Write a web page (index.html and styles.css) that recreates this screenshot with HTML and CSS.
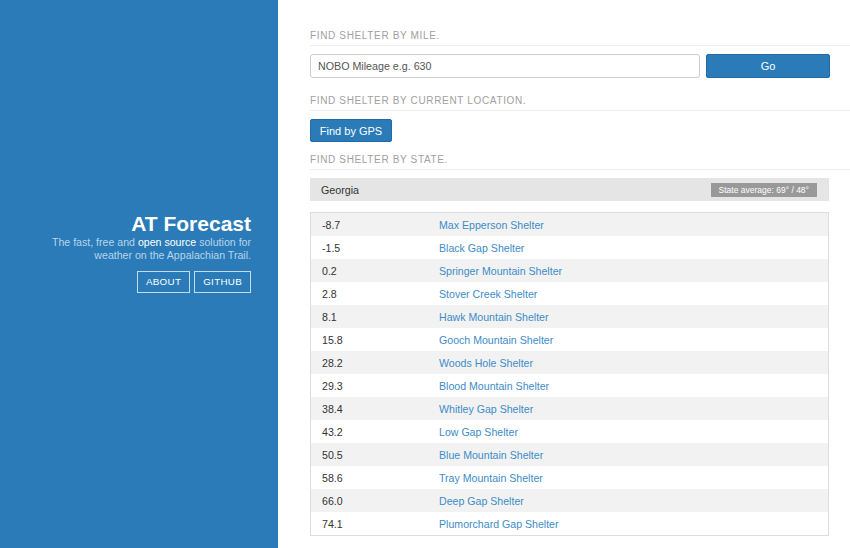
FILE: index.html
```html
<!DOCTYPE html>
<html>
<head>
<meta charset="utf-8">
<link rel="stylesheet" href="styles.css">
</head>
<body>
<div class="page">
  <aside class="sidebar">
    <div class="brand">
      <h1 class="title">AT Forecast</h1>
      <p class="tagline">The fast, free and <span class="hl">open source</span> solution for<br>weather on the Appalachian Trail.</p>
      <div class="nav">
        <a class="navbtn">ABOUT</a>
        <a class="navbtn">GITHUB</a>
      </div>
    </div>
  </aside>
  <main class="main">
    <h2 class="section">FIND SHELTER BY MILE.</h2>
    <div class="mile-row">
      <div class="input">NOBO Mileage e.g. 630</div>
      <button class="btn go">Go</button>
    </div>
    <h2 class="section">FIND SHELTER BY CURRENT LOCATION.</h2>
    <div class="gps-row"><button class="btn gps">Find by GPS</button></div>
    <h2 class="section">FIND SHELTER BY STATE.</h2>
    <div class="state">
      <span>Georgia</span>
      <span class="badge">State average: 69° / 48°</span>
    </div>
    <div class="table">
      <div class="row"><span class="mile">-8.7</span><a class="name">Max Epperson Shelter</a></div>
      <div class="row"><span class="mile">-1.5</span><a class="name">Black Gap Shelter</a></div>
      <div class="row"><span class="mile">0.2</span><a class="name">Springer Mountain Shelter</a></div>
      <div class="row"><span class="mile">2.8</span><a class="name">Stover Creek Shelter</a></div>
      <div class="row"><span class="mile">8.1</span><a class="name">Hawk Mountain Shelter</a></div>
      <div class="row"><span class="mile">15.8</span><a class="name">Gooch Mountain Shelter</a></div>
      <div class="row"><span class="mile">28.2</span><a class="name">Woods Hole Shelter</a></div>
      <div class="row"><span class="mile">29.3</span><a class="name">Blood Mountain Shelter</a></div>
      <div class="row"><span class="mile">38.4</span><a class="name">Whitley Gap Shelter</a></div>
      <div class="row"><span class="mile">43.2</span><a class="name">Low Gap Shelter</a></div>
      <div class="row"><span class="mile">50.5</span><a class="name">Blue Mountain Shelter</a></div>
      <div class="row"><span class="mile">58.6</span><a class="name">Tray Mountain Shelter</a></div>
      <div class="row"><span class="mile">66.0</span><a class="name">Deep Gap Shelter</a></div>
      <div class="row"><span class="mile">74.1</span><a class="name">Plumorchard Gap Shelter</a></div>
    </div>
  </main>
</div>
</body>
</html>
```
FILE: styles.css
```css
html, body { margin: 0; padding: 0; }
body {
  font-family: "Liberation Sans", Arial, sans-serif;
  color: #333;
  background: #fff;
  overflow: hidden;
}
.page { display: flex; height: 548px; }
.sidebar {
  width: 278px;
  flex: none;
  background: #2a7bb7;
  display: flex;
  justify-content: flex-end;
  align-items: flex-start;
  padding-top: 212px;
  box-sizing: border-box;
  padding-right: 27px;
}
.brand { text-align: right; }
.title {
  margin: 0;
  font-size: 21px;
  font-weight: bold;
  color: #fff;
  line-height: 24px;
}
.tagline {
  margin: 0;
  font-size: 10.6px;
  line-height: 13px;
  color: #b7d5ee;
}
.hl { color: #fff; }
.nav { display: flex; justify-content: flex-end; gap: 4px; margin-top: 9px; }
.navbtn {
  display: block;
  border: 1px solid #c5dcef;
  color: #fff;
  font-size: 9.8px;
  letter-spacing: 0.3px;
  padding: 0 8px;
  height: 20px;
  line-height: 20px;
}
.main {
  flex: 1;
  padding-left: 32px;
  padding-top: 30px;
}
.section {
  margin: 0;
  font-size: 10px;
  font-weight: normal;
  color: #a0a0a0;
  letter-spacing: 0.65px;
  line-height: 12px;
  padding-bottom: 3px;
  border-bottom: 1px solid #eee;
}
.mile-row {
  display: flex;
  gap: 6px;
  margin: 8px 20px 17px 0;
}
.input {
  width: 390px;
  height: 24px;
  box-sizing: border-box;
  border: 1px solid #ccc;
  border-radius: 3px;
  font-size: 10.7px;
  line-height: 22px;
  padding-left: 7px;
  color: #555;
}
.btn {
  font-family: "Liberation Sans", Arial, sans-serif;
  background: #2a7bb7;
  color: #fff;
  border: 1px solid #236ba2;
  border-radius: 2px;
  font-size: 11px;
  padding: 0;
  height: 24px;
}
.go { width: 124px; }
.gps-row { margin: 8px 0 12px; display: flex; }
.gps { width: 82px; height: 23px; }
.state {
  margin: 8px 21px 0 0;
  height: 23px;
  background: #e5e5e5;
  display: flex;
  align-items: center;
  justify-content: space-between;
  padding: 0 12px 0 11px;
  font-size: 10.7px;
  color: #333;
}
.badge {
  background: #999;
  color: #fff;
  font-size: 8.5px;
  padding: 0 8px;
  height: 14px;
  line-height: 14px;
}
.table {
  margin: 11px 21px 0 0;
  border: 1px solid #ddd;
}
.row {
  display: flex;
  height: 23px;
  align-items: center;
  font-size: 10.6px;
}
.row:nth-child(odd) { background: #f2f2f2; }
.mile { width: 117px; padding-left: 11px; color: #333; }
.name { color: #3d8cc8; }
```
